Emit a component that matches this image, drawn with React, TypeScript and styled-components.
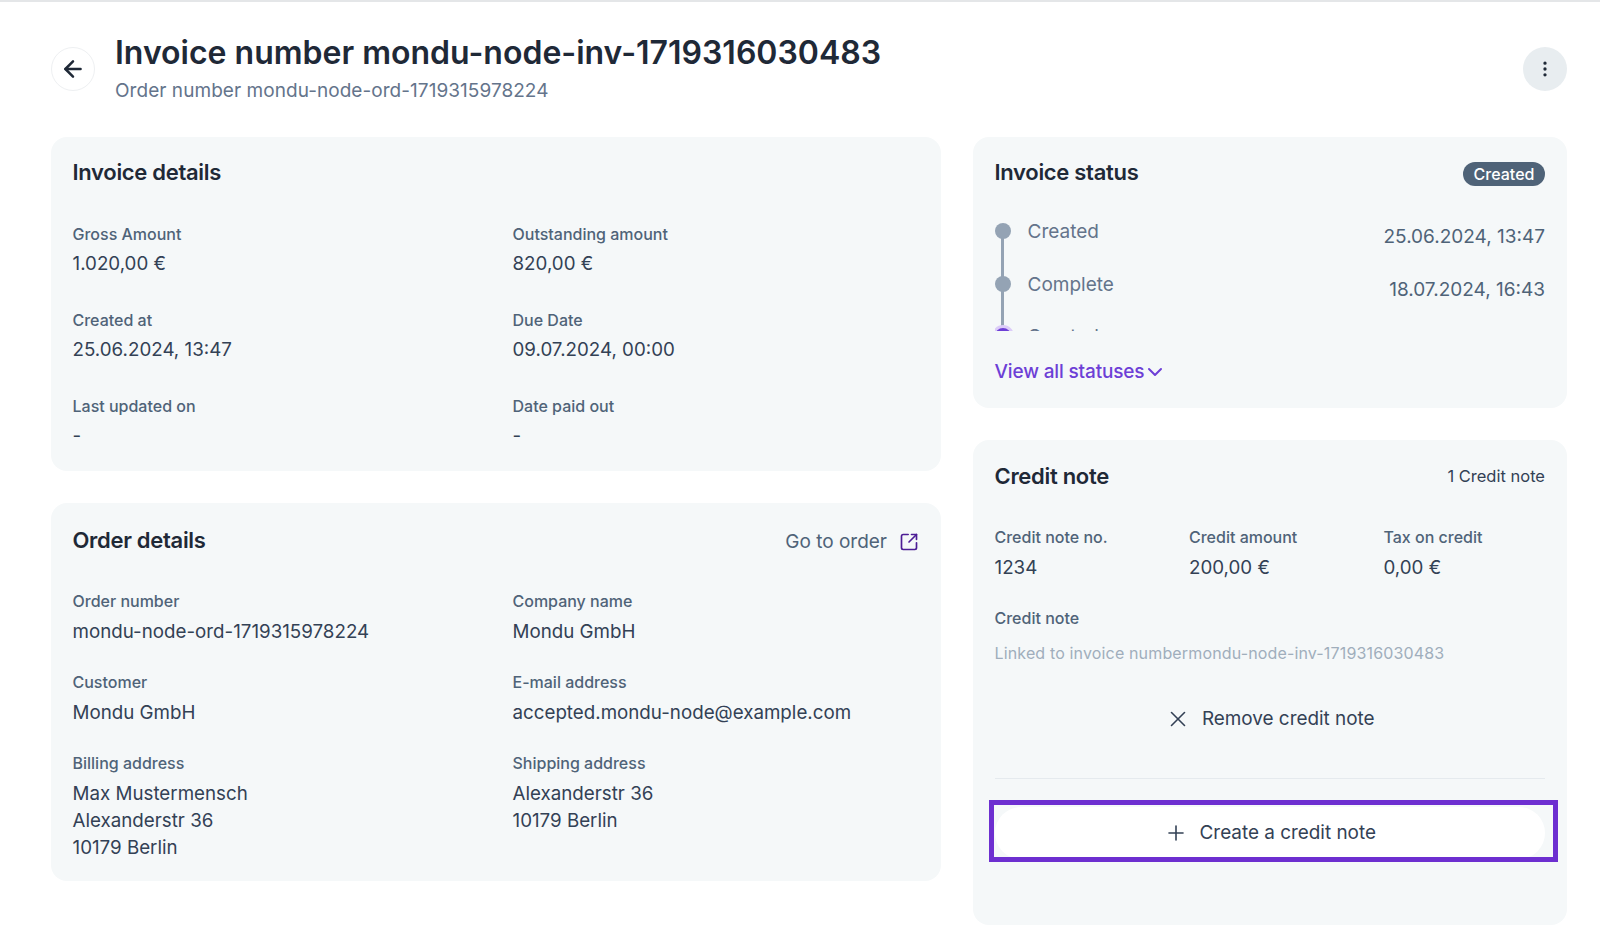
import React from 'react';
import styled, { createGlobalStyle } from 'styled-components';
import { ArrowLeft, ChevronDown, EllipsisVertical, Plus, SquareArrowOutUpRight, X } from 'lucide-react';

const GlobalStyle = createGlobalStyle`
  html, body {
    margin: 0;
    padding: 0;
    background: #ffffff;
    font-family: Inter, "Liberation Sans", sans-serif;
    color: #1f2937;
  }
`;

const App = () => {
  return (
    <Page>
      <GlobalStyle />
      <Header>
        <BackButton><ArrowLeft size={26} strokeWidth={2.3} /></BackButton>
        <Titles>
          <Title>Invoice number mondu-node-inv-1719316030483</Title>
          <Subtitle>Order number mondu-node-ord-1719315978224</Subtitle>
        </Titles>
        <MenuButton><EllipsisVertical size={20} /></MenuButton>
      </Header>
      <Columns>
        <Column>
          <Card $height={334} $top={21}>
            <CardHead>
              <CardTitle>Invoice details</CardTitle>
            </CardHead>
            <DetailGrid>
              <Field $rowHeight={86}><Label>Gross Amount</Label><Value>1.020,00 €</Value></Field>
              <Field $rowHeight={86}><Label>Outstanding amount</Label><Value>820,00 €</Value></Field>
              <Field $rowHeight={86}><Label>Created at</Label><Value>25.06.2024, 13:47</Value></Field>
              <Field $rowHeight={86}><Label>Due Date</Label><Value>09.07.2024, 00:00</Value></Field>
              <Field $rowHeight={86}><Label>Last updated on</Label><Value>-</Value></Field>
              <Field $rowHeight={86}><Label>Date paid out</Label><Value>-</Value></Field>
            </DetailGrid>
          </Card>
          <Card $height={378} $top={22.5}>
            <CardHead>
              <CardTitle>Order details</CardTitle>
              <GoToOrder>Go to order<SquareArrowOutUpRight size={20} strokeWidth={2} color="#4c1d95" /></GoToOrder>
            </CardHead>
            <DetailGrid>
              <Field $rowHeight={81}><Label>Order number</Label><Value>mondu-node-ord-1719315978224</Value></Field>
              <Field $rowHeight={81}><Label>Company name</Label><Value>Mondu GmbH</Value></Field>
              <Field $rowHeight={81}><Label>Customer</Label><Value>Mondu GmbH</Value></Field>
              <Field $rowHeight={81}><Label>E-mail address</Label><Value>accepted.mondu-node@example.com</Value></Field>
              <Field $rowHeight={81}><Label>Billing address</Label><Value>Max Mustermensch<br />Alexanderstr 36<br />10179 Berlin</Value></Field>
              <Field $rowHeight={81}><Label>Shipping address</Label><Value>Alexanderstr 36<br />10179 Berlin</Value></Field>
            </DetailGrid>
          </Card>
        </Column>
        <Column>
          <Card $height={271} $top={21}>
            <CardHead>
              <CardTitle>Invoice status</CardTitle>
              <Badge>Created</Badge>
            </CardHead>
            <Timeline>
              <TimelineRow>
                <Dot />
                <StepName>Created</StepName>
                <StepDate>25.06.2024, 13:47</StepDate>
              </TimelineRow>
              <TimelineRow>
                <Dot />
                <StepName>Complete</StepName>
                <StepDate>18.07.2024, 16:43</StepDate>
              </TimelineRow>
              <TimelineRow>
                <Dot $current />
                <StepName>Created</StepName>
              </TimelineRow>
            </Timeline>
            <ViewAll>View all statuses<ChevronDown size={24} strokeWidth={2} /></ViewAll>
          </Card>
          <Card $height={485} $top={22}>
            <CardHead>
              <CardTitle>Credit note</CardTitle>
              <Count>1 Credit note</Count>
            </CardHead>
            <CreditGrid>
              <div><Label>Credit note no.</Label><Value>1234</Value></div>
              <div><Label>Credit amount</Label><Value>200,00 €</Value></div>
              <div><Label>Tax on credit</Label><Value>0,00 €</Value></div>
            </CreditGrid>
            <NoteLabel>Credit note</NoteLabel>
            <LinkedText>Linked to invoice numbermondu-node-inv-1719316030483</LinkedText>
            <RemoveButton><X size={26} strokeWidth={1.5} />Remove credit note</RemoveButton>
            <Divider />
            <CreateWrap>
              <CreateButton><Plus size={24} strokeWidth={1.6} />Create a credit note</CreateButton>
              <Highlight />
            </CreateWrap>
          </Card>
        </Column>
      </Columns>
    </Page>
  );
};

const Page = styled.div`
  width: 1600px;
  height: 938px;
  box-sizing: border-box;
  border-top: 2px solid #e4e6e8;
  padding: 0 33px 0 51px;
  overflow: hidden;
`;

const Header = styled.div`
  display: flex;
  align-items: flex-start;
  height: 135px;
  padding-top: 33px;
  box-sizing: border-box;
`;

const BackButton = styled.button`
  width: 44px;
  height: 44px;
  margin-top: 12px;
  border-radius: 50%;
  border: 1px solid #eef0f2;
  background: #ffffff;
  color: #1f2937;
  display: flex;
  align-items: center;
  justify-content: center;
  padding: 0;
  flex: none;
`;

const Titles = styled.div`
  margin-left: 20px;
  flex: 1;
`;

const Title = styled.h1`
  margin: 0;
  font-size: 32px;
  line-height: 36px;
  font-weight: 600;
  color: #1f2937;
`;

const Subtitle = styled.div`
  margin-top: 6px;
  font-size: 19px;
  line-height: 28px;
  letter-spacing: 0.05px;
  color: #64748b;
`;

const MenuButton = styled.button`
  width: 44px;
  height: 44px;
  margin-top: 12px;
  border-radius: 50%;
  border: 0;
  background: #e8edf0;
  color: #1f2937;
  display: flex;
  align-items: center;
  justify-content: center;
  padding: 0;
  flex: none;
`;

const Columns = styled.div`
  display: grid;
  grid-template-columns: 890px 594px;
  column-gap: 32px;
`;

const Column = styled.div`
  display: flex;
  flex-direction: column;
  gap: 32px;
`;

const Card = styled.section<{ $height: number; $top: number }>`
  height: ${(p) => p.$height}px;
  box-sizing: border-box;
  padding: ${(p) => p.$top}px 22px 0 21.5px;
  background: #f5f8f9;
  border-radius: 16px;
`;

const CardHead = styled.div`
  display: flex;
  justify-content: space-between;
  align-items: center;
  height: 28px;
`;

const CardTitle = styled.h2`
  margin: 0;
  font-size: 22px;
  line-height: 28px;
  font-weight: 600;
  letter-spacing: -0.3px;
  color: #1f2937;
`;

const DetailGrid = styled.div`
  display: grid;
  grid-template-columns: 440px 1fr;
  margin-top: 35.5px;
`;

const Field = styled.div<{ $rowHeight: number }>`
  min-height: ${(p) => p.$rowHeight}px;
`;

const Label = styled.div`
  font-size: 16px;
  line-height: 24px;
  font-weight: 500;
  color: #4f6378;
`;

const Value = styled.div`
  margin-top: 4.5px;
  font-size: 18.75px;
  line-height: 27px;
  color: #334155;
`;

const GoToOrder = styled.a`
  display: flex;
  align-items: center;
  gap: 12px;
  font-size: 19px;
  line-height: 28px;
  color: #4f6378;
  padding-top: 4px;
`;

const Badge = styled.span`
  width: 82px;
  height: 24px;
  margin-top: 4px;
  border-radius: 12px;
  background: #4f6378;
  color: #ffffff;
  font-size: 16px;
  line-height: 24px;
  font-weight: 500;
  text-align: center;
`;

const Timeline = styled.div`
  height: 124px;
  margin-top: 21px;
  padding-top: 16px;
  box-sizing: border-box;
  overflow: hidden;
`;

const TimelineRow = styled.div`
  position: relative;
  display: flex;
  height: 52.5px;
  padding-left: 33px;
`;

const Dot = styled.span<{ $current?: boolean }>`
  position: absolute;
  left: 0;
  top: 0;
  width: 16px;
  height: 16px;
  border-radius: 50%;
  background: ${(p) => (p.$current ? '#6d3fd6' : '#94a3b4')};
  box-shadow: ${(p) => (p.$current ? '0 0 0 3px #dcccf8' : 'none')};

  &::after {
    content: ${(p) => (p.$current ? 'none' : '""')};
    position: absolute;
    left: 6.5px;
    top: 14px;
    width: 3px;
    height: 40px;
    background: #94a3b4;
  }
`;

const StepName = styled.span`
  margin-top: -5px;
  font-size: 19px;
  line-height: 28px;
  color: #64748b;
  flex: 1;
`;

const StepDate = styled.span`
  font-size: 19px;
  line-height: 28px;
  color: #4f6378;
`;

const ViewAll = styled.a`
  display: flex;
  align-items: center;
  margin-top: 27px;
  font-size: 19px;
  line-height: 28px;
  font-weight: 500;
  letter-spacing: -0.15px;
  color: #6d3fd6;

  & > svg {
    margin-left: -1px;
  }
`;

const Count = styled.span`
  font-size: 16.5px;
  line-height: 24px;
  color: #334155;
`;

const CreditGrid = styled.div`
  display: grid;
  grid-template-columns: repeat(3, 194.5px);
  margin-top: 35px;
`;

const NoteLabel = styled(Label)`
  margin-top: 25px;
`;

const LinkedText = styled.div`
  margin-top: 11px;
  font-size: 16px;
  line-height: 24px;
  letter-spacing: 0.15px;
  color: #a0aebc;
`;

const RemoveButton = styled.div`
  display: flex;
  align-items: center;
  justify-content: center;
  gap: 11px;
  margin-top: 34px;
  height: 40px;
  font-size: 18.9px;
  color: #334155;
`;

const Divider = styled.div`
  height: 1px;
  margin-top: 39px;
  background: #e5eaee;
`;

const CreateWrap = styled.div`
  position: relative;
  margin-top: 28px;
`;

const CreateButton = styled.div`
  display: flex;
  align-items: center;
  justify-content: center;
  gap: 12px;
  height: 52px;
  border-radius: 26px;
  background: #ffffff;
  font-size: 18.9px;
  color: #334155;
`;

const Highlight = styled.div`
  position: absolute;
  left: -6px;
  right: -13px;
  top: -7px;
  height: 62px;
  box-sizing: border-box;
  border: 5px solid #6d2fd0;
`;

export default App;
